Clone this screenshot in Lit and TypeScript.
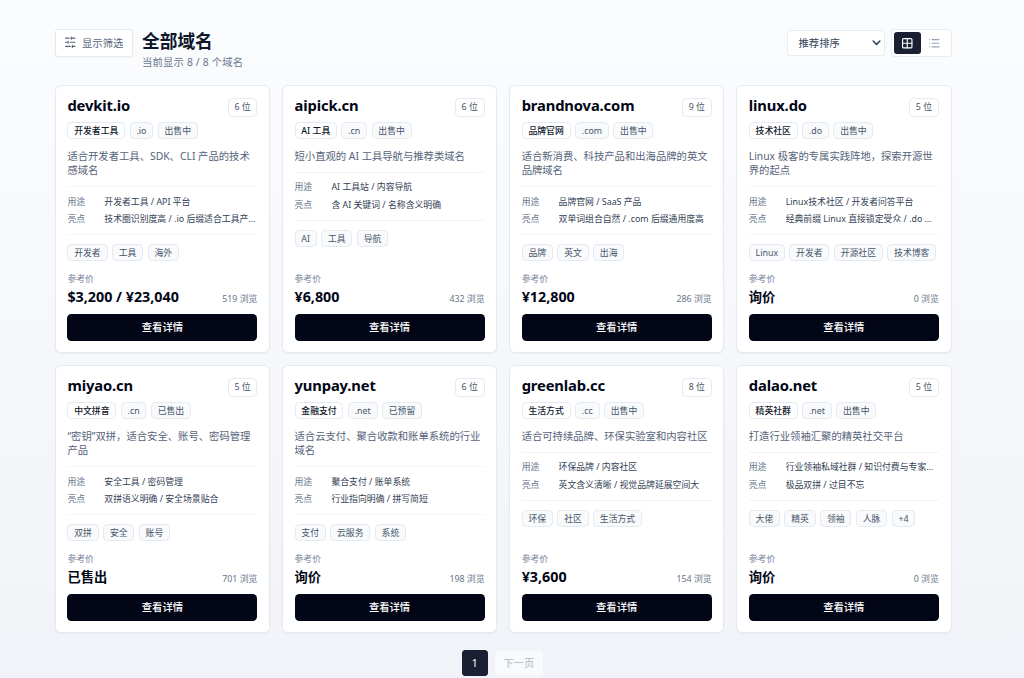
import { LitElement, html, css, svg } from "lit";
import { customElement, property, state } from "lit/decorators.js";
import { classMap } from "lit/directives/class-map.js";

interface Domain {
  name: string;
  length: number;
  category: string;
  suffix: string;
  status: string;
  description: string;
  usage: string;
  highlight: string;
  tags: string[];
  price: string;
  views: number;
}

const DOMAINS: Domain[] = [
  { name: "devkit.io", length: 6, category: "开发者工具", suffix: ".io", status: "出售中", description: "适合开发者工具、SDK、CLI 产品的技术感域名", usage: "开发者工具 / API 平台", highlight: "技术圈识别度高 / .io 后缀适合工具产品使用", tags: ["开发者", "工具", "海外"], price: "$3,200 / ¥23,040", views: 519 },
  { name: "aipick.cn", length: 6, category: "AI 工具", suffix: ".cn", status: "出售中", description: "短小直观的 AI 工具导航与推荐类域名", usage: "AI 工具站 / 内容导航", highlight: "含 AI 关键词 / 名称含义明确", tags: ["AI", "工具", "导航"], price: "¥6,800", views: 432 },
  { name: "brandnova.com", length: 9, category: "品牌官网", suffix: ".com", status: "出售中", description: "适合新消费、科技产品和出海品牌的英文品牌域名", usage: "品牌官网 / SaaS 产品", highlight: "双单词组合自然 / .com 后缀通用度高", tags: ["品牌", "英文", "出海"], price: "¥12,800", views: 286 },
  { name: "linux.do", length: 5, category: "技术社区", suffix: ".do", status: "出售中", description: "Linux 极客的专属实践阵地，探索开源世界的起点", usage: "Linux技术社区 / 开发者问答平台", highlight: "经典前缀 Linux 直接锁定受众 / .do 后缀", tags: ["Linux", "开发者", "开源社区", "技术博客"], price: "询价", views: 0 },
  { name: "miyao.cn", length: 5, category: "中文拼音", suffix: ".cn", status: "已售出", description: "“密钥”双拼，适合安全、账号、密码管理产品", usage: "安全工具 / 密码管理", highlight: "双拼语义明确 / 安全场景贴合", tags: ["双拼", "安全", "账号"], price: "已售出", views: 701 },
  { name: "yunpay.net", length: 6, category: "金融支付", suffix: ".net", status: "已预留", description: "适合云支付、聚合收款和账单系统的行业域名", usage: "聚合支付 / 账单系统", highlight: "行业指向明确 / 拼写简短", tags: ["支付", "云服务", "系统"], price: "询价", views: 198 },
  { name: "greenlab.cc", length: 8, category: "生活方式", suffix: ".cc", status: "出售中", description: "适合可持续品牌、环保实验室和内容社区", usage: "环保品牌 / 内容社区", highlight: "英文含义清晰 / 视觉品牌延展空间大", tags: ["环保", "社区", "生活方式"], price: "¥3,600", views: 154 },
  { name: "dalao.net", length: 5, category: "精英社群", suffix: ".net", status: "出售中", description: "打造行业领袖汇聚的精英社交平台", usage: "行业领袖私域社群 / 知识付费与专家咨询", highlight: "极品双拼 / 过目不忘", tags: ["大佬", "精英", "领袖", "人脉", "+4"], price: "询价", views: 0 },
];

@customElement("domain-card")
export class DomainCard extends LitElement {
  @property({ attribute: false }) domain!: Domain;

  static styles = css`
    :host {
      display: flex;
      flex-direction: column;
      box-sizing: border-box;
      min-width: 0;
      padding: 11px 11.7px 11.5px 11.4px;
      background: #fff;
      border: 1px solid #e5eaf2;
      border-radius: 6px;
      box-shadow: 0 1px 2px rgba(15, 23, 42, 0.04);
    }
    .head {
      display: flex;
      justify-content: space-between;
      align-items: flex-start;
      height: 25px;
    }
    .name {
      margin: 0;
      font-size: 14.75px;
      line-height: 16px;
      font-weight: 700;
      letter-spacing: -0.13px;
      color: #020617;
    }
    .chip {
      display: inline-flex;
      align-items: center;
      box-sizing: border-box;
      height: 17px;
      padding: 0 5.8px;
      border: 1px solid #e5eaf2;
      border-radius: 4.4px;
      background: #f8fafc;
      font-size: 8.86px;
      line-height: 12px;
      color: #475569;
      white-space: nowrap;
    }
    .length {
      height: 19px;
      margin-top: 1px;
      padding-bottom: 1px;
      background: #fff;
    }
    .category {
      background: #fff;
      color: #0f172a;
      font-weight: 500;
    }
    .row {
      display: flex;
      gap: 4.43px;
    }
    .description {
      margin: 10px 0 8.4px;
      font-size: 10.33px;
      line-height: 14.3px;
      color: #56637a;
    }
    .facts {
      display: grid;
      grid-template-columns: 32.5px minmax(0, 1fr);
      column-gap: 4.43px;
      align-content: center;
      box-sizing: border-box;
      height: 49px;
      margin: 0 0 9.5px;
      padding-top: 1px;
      border: solid #f1f5f9;
      border-width: 1px 0;
      font-size: 8.86px;
      line-height: 17.3px;
    }
    .label {
      color: #64748b;
    }
    .value {
      margin: 0;
      overflow: hidden;
      white-space: nowrap;
      text-overflow: ellipsis;
      color: #334155;
    }
    .bottom {
      margin-top: auto;
    }
    .caption {
      font-size: 8.86px;
      line-height: 12px;
      color: #7a879b;
    }
    .sale {
      display: flex;
      justify-content: space-between;
      align-items: flex-end;
      height: 21px;
      margin-bottom: 7.5px;
    }
    .price {
      font-size: 13.28px;
      line-height: 18px;
      font-weight: 700;
      color: #020617;
    }
    .numeric {
      font-size: 14.3px;
      line-height: 19px;
    }
    .views {
      font-size: 8.86px;
      line-height: 13px;
      color: #64748b;
    }
    .details {
      display: block;
      width: 100%;
      height: 27px;
      padding: 0;
      border: 0;
      border-radius: 4.4px;
      background: #020617;
      color: #fff;
      font: 500 10.33px/26px "Noto Sans", "Noto Sans CJK SC", sans-serif;
    }
  `;

  render() {
    const d = this.domain;
    return html`
      <header class="head">
        <h2 class="name">${d.name}</h2>
        <span class="chip length">${d.length} 位</span>
      </header>
      <div class="row">
        <span class="chip category">${d.category}</span>
        <span class="chip">${d.suffix}</span>
        <span class="chip">${d.status}</span>
      </div>
      <p class="description">${d.description}</p>
      <div class="facts">
        <span class="label">用途</span><span class="value">${d.usage}</span>
        <span class="label">亮点</span><span class="value">${d.highlight}</span>
      </div>
      <div class="row">${d.tags.map((tag) => html`<span class="chip">${tag}</span>`)}</div>
      <div class="bottom">
        <div class="caption">参考价</div>
        <div class="sale">
          <span class=${classMap({ price: true, numeric: /\d/.test(d.price) })}>${d.price}</span>
          <span class="views">${d.views} 浏览</span>
        </div>
        <button class="details">查看详情</button>
      </div>
    `;
  }
}

const filterIcon = svg`<path d="M21 4h-7M10 4H3M21 12h-9M8 12H3M21 20h-5M12 20H3M14 2v4M8 10v4M16 18v4" />`;
const gridIcon = svg`<rect x="3" y="3" width="18" height="18" rx="2" /><path d="M3 12h18M12 3v18" />`;
const listIcon = svg`<path d="M3 5h.01M3 12h.01M3 19h.01M8 5h13M8 12h13M8 19h13" />`;

@customElement("app-root")
export class AppRoot extends LitElement {
  @state() private view: "grid" | "list" = "grid";

  static styles = css`
    :host {
      display: block;
      box-sizing: border-box;
      height: 678px;
      overflow: hidden;
      padding: 29px 72.5px 0 55px;
      background: linear-gradient(#fbfcfe, #f1f3f8);
      font-family: "Noto Sans", "Noto Sans CJK SC", sans-serif;
      color: #0f172a;
    }
    .toolbar {
      display: flex;
      align-items: flex-start;
      height: 56px;
    }
    .icon {
      display: block;
      width: 12.5px;
      height: 12.5px;
      fill: none;
      stroke: currentColor;
      stroke-width: 2.2;
      stroke-linecap: round;
      stroke-linejoin: round;
    }
    .filter {
      display: flex;
      align-items: center;
      gap: 5.5px;
      box-sizing: border-box;
      width: 78px;
      height: 28px;
      padding: 0 0 1px 8px;
      border: 1px solid #e5eaf2;
      border-radius: 3px;
      background: #fff;
      box-shadow: 0 1px 2px rgba(15, 23, 42, 0.04);
      color: #56637a;
      font: 400 10.33px/14px "Noto Sans", "Noto Sans CJK SC", sans-serif;
      white-space: nowrap;
    }
    .heading {
      flex: 1;
      margin-left: 9px;
    }
    .title {
      margin: 0;
      font-size: 17.7px;
      line-height: 24px;
      font-weight: 700;
    }
    .subtitle {
      margin: 2px 0 0;
      font-size: 10.33px;
      line-height: 15px;
      letter-spacing: 0.18px;
      color: #6b788e;
    }
    .sort {
      display: flex;
      align-items: center;
      justify-content: space-between;
      box-sizing: border-box;
      width: 98px;
      height: 26px;
      margin: 1px 6px 0 0;
      padding: 0 3px 1px 11px;
      border: 1px solid #e8ecf3;
      border-radius: 3px;
      background: #fff;
      font-size: 10.33px;
      color: #334155;
    }
    .chevron {
      width: 9px;
      height: 9px;
      stroke-width: 4;
    }
    .switch {
      display: flex;
      box-sizing: border-box;
      width: 61px;
      height: 28px;
      padding: 2px;
      border: 1px solid #e8ecf3;
      border-radius: 3px;
      background: #fff;
    }
    .mode {
      display: grid;
      place-items: center;
      width: 27px;
      height: 22px;
      padding: 0;
      border: 0;
      border-radius: 3px;
      background: none;
      color: #94a3b8;
    }
    .mode.active {
      background: #1a1f33;
      color: #fff;
    }
    .cards {
      display: grid;
      grid-template-columns: repeat(4, minmax(0, 1fr));
      grid-auto-rows: 268px;
      gap: 12px;
    }
    .pager {
      display: flex;
      justify-content: center;
      gap: 6px;
      margin-top: 17px;
      padding-right: 1px;
    }
    .page,
    .next {
      box-sizing: border-box;
      height: 26px;
      padding: 0;
      border-radius: 3px;
      font: 400 10.33px/24px "Noto Sans", "Noto Sans CJK SC", sans-serif;
    }
    .page {
      width: 26px;
      border: 1px solid #1a1f33;
      background: #1a1f33;
      color: #fff;
    }
    .next {
      width: 50px;
      border: 1px solid #f0f3f8;
      background: #f9fafc;
      color: #b0b7c3;
    }
  `;

  private mode(name: "grid" | "list", icon: unknown) {
    return html`<button
      class=${classMap({ mode: true, active: this.view === name })}
      @click=${() => (this.view = name)}
    >
      <svg class="icon" viewBox="0 0 24 24">${icon}</svg>
    </button>`;
  }

  render() {
    return html`
      <header class="toolbar">
        <button class="filter">
          <svg class="icon" viewBox="0 0 24 24">${filterIcon}</svg>显示筛选
        </button>
        <div class="heading">
          <h1 class="title">全部域名</h1>
          <p class="subtitle">当前显示 8 / 8 个域名</p>
        </div>
        <div class="sort">
          推荐排序
          <svg class="icon chevron" viewBox="0 0 24 24"><path d="m3 8 9 9 9-9" /></svg>
        </div>
        <div class="switch">${this.mode("grid", gridIcon)}${this.mode("list", listIcon)}</div>
      </header>
      <main class="cards">
        ${DOMAINS.map((d) => html`<domain-card .domain=${d}></domain-card>`)}
      </main>
      <nav class="pager">
        <button class="page">1</button>
        <button class="next" disabled>下一页</button>
      </nav>
    `;
  }
}
